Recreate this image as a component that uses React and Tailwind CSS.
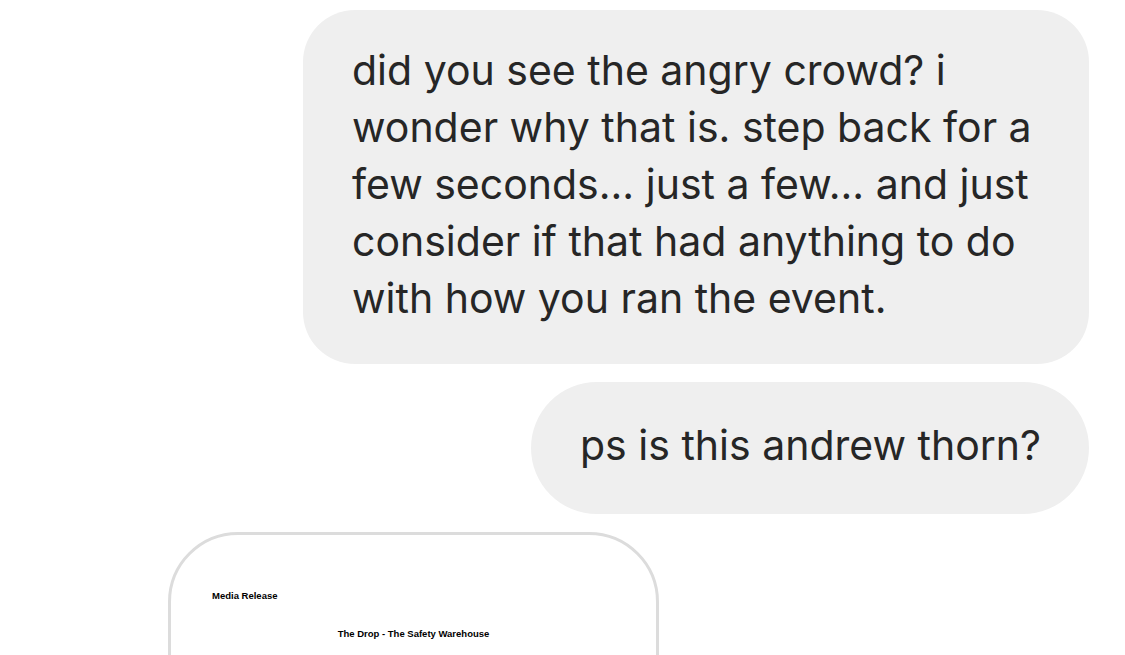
export default function App() {
  return (
    <div className="w-[1125px] h-[655px] overflow-hidden bg-white font-['Inter','Roboto',sans-serif]">
      <div className="flex flex-col items-end gap-[18px] pt-[10px] pr-[36px]">
        {/* outgoing messages */}
        <div className="w-[786px] rounded-[52px] bg-[#efefef] pl-[49px] pr-[40px] pt-[32px] pb-[37px] text-[41px] leading-[57px] text-[#262626]">
          did you see the angry crowd? i wonder why that is. step back for a few seconds... just a few... and just consider if that had anything to do with how you ran the event.
        </div>
        <div className="w-[558px] h-[132px] flex items-center rounded-[66px] bg-[#efefef] pl-[49px] pb-[5px] text-[41px] leading-[57px] text-[#262626]">
          ps is this andrew thorn?
        </div>

        {/* shared document preview */}
        <div className="self-start ml-[168px] w-[491px] h-[200px] rounded-t-[70px] border-[3px] border-[#dcdcdc] bg-white font-['Liberation_Sans',Arial,sans-serif] font-bold text-[9.5px] text-black">
          <div className="pl-[41px] pt-[55px] leading-[12px]">Media Release</div>
          <div className="pt-[26px] text-center leading-[12px]">The Drop - The Safety Warehouse</div>
        </div>
      </div>
    </div>
  );
}
